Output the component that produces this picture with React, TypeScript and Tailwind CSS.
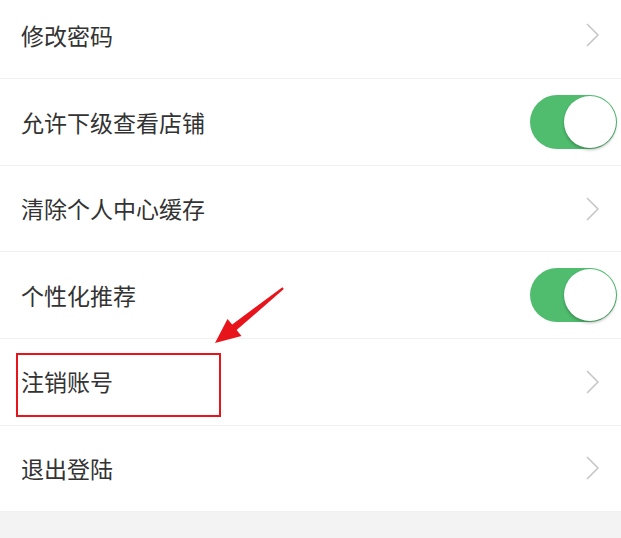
type Item = {
    label: string;
    toggle?: boolean;
};

const items: Item[] = [
    { label: '修改密码' },
    { label: '允许下级查看店铺', toggle: true },
    { label: '清除个人中心缓存' },
    { label: '个性化推荐', toggle: true },
    { label: '注销账号' },
    { label: '退出登陆' },
];

function Toggle() {
    return (
        <div className="flex h-[54px] w-[87px] items-center justify-end rounded-full bg-[#4fbc6e] p-[1px]">
            <div className="h-[52px] w-[52px] rounded-full bg-white shadow-[0_2px_3px_rgba(0,0,0,0.25)]" />
        </div>
    );
}

function Chevron() {
    return (
        <svg width="14" height="24" viewBox="0 0 14 24" fill="none">
            <polyline points="1.5,1.5 12,12 1.5,22.5" stroke="#c8c8c8" strokeWidth="1.7" strokeLinecap="round" strokeLinejoin="round" />
        </svg>
    );
}

export default function App() {
    return (
        <div
            className="relative h-[538px] w-[621px] overflow-hidden bg-[#f3f3f3]"
            style={{ fontFamily: '"Noto Sans CJK SC", "Noto Sans", sans-serif' }}
        >
            <div className="-mt-[7.4px] bg-white">
                {items.map((item) => (
                    <div
                        key={item.label}
                        className="flex h-[86.6px] items-center justify-between border-b border-[#f0f0f0] pl-[21px]"
                    >
                        <span className="text-[23px] leading-none text-[#333333]">{item.label}</span>
                        {item.toggle ? (
                            <div className="pr-[4px]">
                                <Toggle />
                            </div>
                        ) : (
                            <div className="pr-[21px]">
                                <Chevron />
                            </div>
                        )}
                    </div>
                ))}
            </div>

            {/* annotation: box around 注销账号 */}
            <div className="pointer-events-none absolute left-[16px] top-[353px] h-[64px] w-[205px] border-2 border-[#e8141c]" />

            {/* annotation: arrow */}
            <svg className="pointer-events-none absolute left-0 top-0" width="621" height="538" viewBox="0 0 621 538">
                <polygon
                    points="282.4,287.2 232.2,324.6 227.5,319 215,343 241.5,336 236.6,330 283.8,289"
                    fill="#e8141c"
                />
            </svg>
        </div>
    );
}
